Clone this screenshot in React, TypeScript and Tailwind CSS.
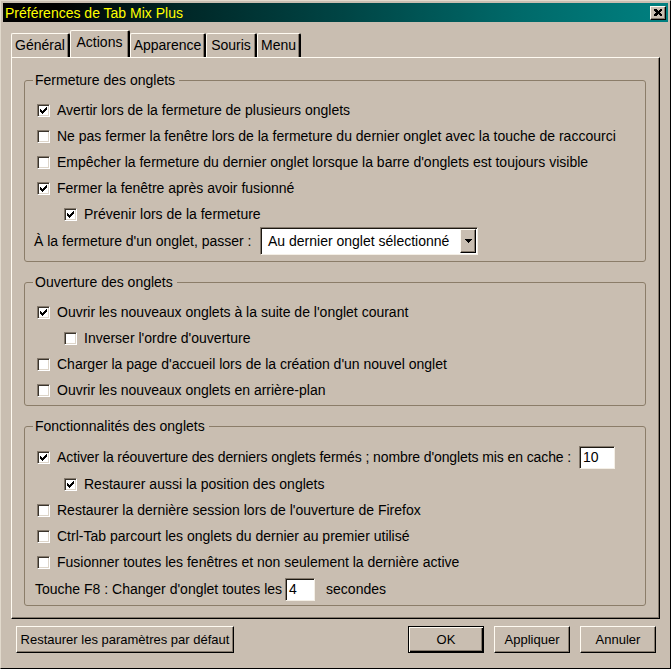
import React from "react";

const Check = () => (
  <svg width="7" height="7" viewBox="0 0 7 7" shapeRendering="crispEdges">
    <path
      d="M6 0h1v3h-1zM5 1h1v3h-1zM4 2h1v3h-1zM3 3h1v3h-1zM2 4h1v3h-1zM1 3h1v3h-1zM0 2h1v3h-1z"
      fill="#000"
    />
  </svg>
);

const Box = ({ on }: { on?: boolean }) => (
  <span className="w-[13px] h-[13px] shrink-0 bg-white flex items-center justify-center border border-t-[#857a6d] border-l-[#857a6d] border-r-white border-b-white shadow-[inset_1px_1px_0_#3a342c,inset_-1px_-1px_0_#ddd5c9]">
    {on && <Check />}
  </span>
);

const CheckRow = ({
  on,
  indent,
  children,
  tall,
}: {
  on?: boolean;
  indent?: boolean;
  tall?: boolean;
  children: React.ReactNode;
}) => (
  <div
    className={`flex items-center gap-[7px] ${tall ? "h-[28px]" : "h-[26px]"} ${
      indent ? "pl-[31px]" : "pl-[4px]"
    }`}
  >
    <Box on={on} />
    {children}
  </div>
);

const Field = ({ value, w }: { value: string; w: string }) => (
  <span
    className={`${w} h-[23px] shrink-0 bg-white flex items-center pl-[3px] border border-t-[#857a6d] border-l-[#857a6d] border-r-[#f4efe6] border-b-[#f4efe6] shadow-[inset_1px_1px_0_#1c1812]`}
  >
    {value}
  </span>
);

const Group = ({
  title,
  className,
  children,
}: {
  title: string;
  className?: string;
  children: React.ReactNode;
}) => (
  <fieldset
    className={`border border-[#8b7d69] rounded-[3px] px-[8px] ${className ?? ""}`}
  >
    <legend className="px-[2px] pr-[4px] leading-[16px]">{title}</legend>
    {children}
  </fieldset>
);

const Button = ({
  children,
  w,
  def,
}: {
  children: React.ReactNode;
  w: string;
  def?: boolean;
}) => (
  <div
    className={`${w} h-[27px] flex items-center justify-center border ${
      def
        ? "border-black shadow-[inset_1px_1px_0_#fffbf2,inset_-1px_-1px_0_#000,inset_-2px_-2px_0_#857a6d]"
        : "border-t-[#fffbf2] border-l-[#fffbf2] border-r-black border-b-black shadow-[inset_-1px_-1px_0_#857a6d]"
    }`}
  >
    {children}
  </div>
);

const tabs = [
  { label: "Général", w: "w-[59px]" },
  { label: "Actions", w: "w-[60px]", active: true },
  { label: "Apparence", w: "w-[76px]" },
  { label: "Souris", w: "w-[51px]" },
  { label: "Menu", w: "w-[44px]" },
];

export default function App() {
  return (
    <div className="w-[671px] h-[669px] bg-[#c9beb1] border border-t-[#e2dacd] border-l-[#e2dacd] border-r-black border-b-black p-[2px] flex flex-col font-['Liberation_Sans',sans-serif] text-[14px] text-black whitespace-nowrap overflow-hidden">
      {/* title bar */}
      <div className="h-[19px] shrink-0 flex items-center justify-between pl-[2px] pr-[2px] bg-[linear-gradient(to_right,#000_0%,#000_8%,#002626_26%,#004646_52%,#006a6a_78%,#008080_100%)]">
        <span className="text-[#ffff00] leading-none">Préférences de Tab Mix Plus</span>
        <span className="w-[16px] h-[14px] flex items-center justify-center bg-[#c9beb1] border border-t-[#fffbf2] border-l-[#fffbf2] border-r-black border-b-black shadow-[inset_-1px_-1px_0_#857a6d]">
          <svg width="8" height="7" viewBox="0 0 8 7" shapeRendering="crispEdges">
            <path d="M0 0h2l2 2 2-2h2v1l-2 2.5 2 2.5v1h-2l-2-2-2 2h-2v-1l2-2.5-2-2.5z" fill="#000" />
          </svg>
        </span>
      </div>

      <div className="flex flex-col px-[8px] pt-[9px]">
        {/* tabs */}
        <div className="flex items-end h-[26px] relative z-10">
          {tabs.map((t) => (
            <div
              key={t.label}
              className={`${t.w} ${
                t.active ? "h-[27px] bg-[#c9beb1] pb-[4px]" : "h-[24px] pb-[1px]"
              } flex items-center justify-center border-t border-l border-t-[#fffbf2] border-l-[#fffbf2] border-r-2 border-r-black rounded-t-[2px] shadow-[inset_-1px_0_0_#857a6d]`}
            >
              {t.label}
            </div>
          ))}
        </div>

        {/* panel */}
        <div className="h-[562px] border border-t-[#fffbf2] border-l-[#fffbf2] border-r-black border-b-black shadow-[inset_-1px_-1px_0_#857a6d] pl-[12px] pr-[13px] pt-[14px]">
          <Group title="Fermeture des onglets" className="pt-[9px] pb-[6px]">
            <CheckRow on>Avertir lors de la fermeture de plusieurs onglets</CheckRow>
            <CheckRow>
              Ne pas fermer la fenêtre lors de la fermeture du dernier onglet avec la touche de raccourci
            </CheckRow>
            <CheckRow>
              Empêcher la fermeture du dernier onglet lorsque la barre d'onglets est toujours visible
            </CheckRow>
            <CheckRow on>Fermer la fenêtre après avoir fusionné</CheckRow>
            <CheckRow on indent>
              Prévenir lors de la fermeture
            </CheckRow>
            <div className="h-[28px] flex items-center pl-[1px]">
              <span className="w-[226px]">À la fermeture d'un onglet, passer :</span>
              <span className="w-[218px] h-[28px] bg-white flex items-center border border-t-[#857a6d] border-l-[#857a6d] border-r-[#f4efe6] border-b-[#f4efe6] shadow-[inset_1px_1px_0_#1c1812]">
                <span className="flex-1 pl-[7px]">Au dernier onglet sélectionné</span>
                <span className="w-[16px] h-[24px] mr-[1px] flex items-center justify-center bg-[#c9beb1] border border-t-[#fffbf2] border-l-[#fffbf2] border-r-black border-b-black shadow-[inset_-1px_-1px_0_#857a6d]">
                  <svg width="7" height="4" viewBox="0 0 7 4" shapeRendering="crispEdges">
                    <path d="M0 0h7v1h-1v1h-1v1h-1v1h-1v-1h-1v-1h-1v-1h-1z" fill="#000" />
                  </svg>
                </span>
              </span>
            </div>
          </Group>

          <Group title="Ouverture des onglets" className="mt-[12px] pt-[9px] pb-[2px]">
            <CheckRow on>Ouvrir les nouveaux onglets à la suite de l'onglet courant</CheckRow>
            <CheckRow indent>Inverser l'ordre d'ouverture</CheckRow>
            <CheckRow>Charger la page d'accueil lors de la création d'un nouvel onglet</CheckRow>
            <CheckRow>Ouvrir les nouveaux onglets en arrière-plan</CheckRow>
          </Group>

          <Group title="Fonctionnalités des onglets" className="mt-[12px] pt-[9px] pb-[2px]">
            <CheckRow on tall>
              <span className="tracking-[-0.1px]">
                Activer la réouverture des derniers onglets fermés ; nombre d'onglets mis en cache :
              </span>
              <span className="ml-auto mr-[22px]">
                <Field value="10" w="w-[36px]" />
              </span>
            </CheckRow>
            <CheckRow on indent>
              Restaurer aussi la position des onglets
            </CheckRow>
            <CheckRow>Restaurer la dernière session lors de l'ouverture de Firefox</CheckRow>
            <CheckRow>Ctrl-Tab parcourt les onglets du dernier au premier utilisé</CheckRow>
            <CheckRow>Fusionner toutes les fenêtres et non seulement la dernière active</CheckRow>
            <div className="h-[28px] flex items-center pl-[2px]">
              <span className="mr-[3px]">Touche F8 : Changer d'onglet toutes les</span>
              <Field value="4" w="w-[30px]" />
              <span className="ml-[11px]">secondes</span>
            </div>
          </Group>
        </div>

        {/* bottom buttons */}
        <div className="flex items-center mt-[7px] pl-[5px] pr-[4px] text-[13px]">
          <Button w="w-[218px]">Restaurer les paramètres par défaut</Button>
          <div className="ml-auto flex gap-[10px]">
            <Button w="w-[76px]" def>
              OK
            </Button>
            <Button w="w-[76px]">Appliquer</Button>
            <Button w="w-[76px]">Annuler</Button>
          </div>
        </div>
      </div>
    </div>
  );
}
